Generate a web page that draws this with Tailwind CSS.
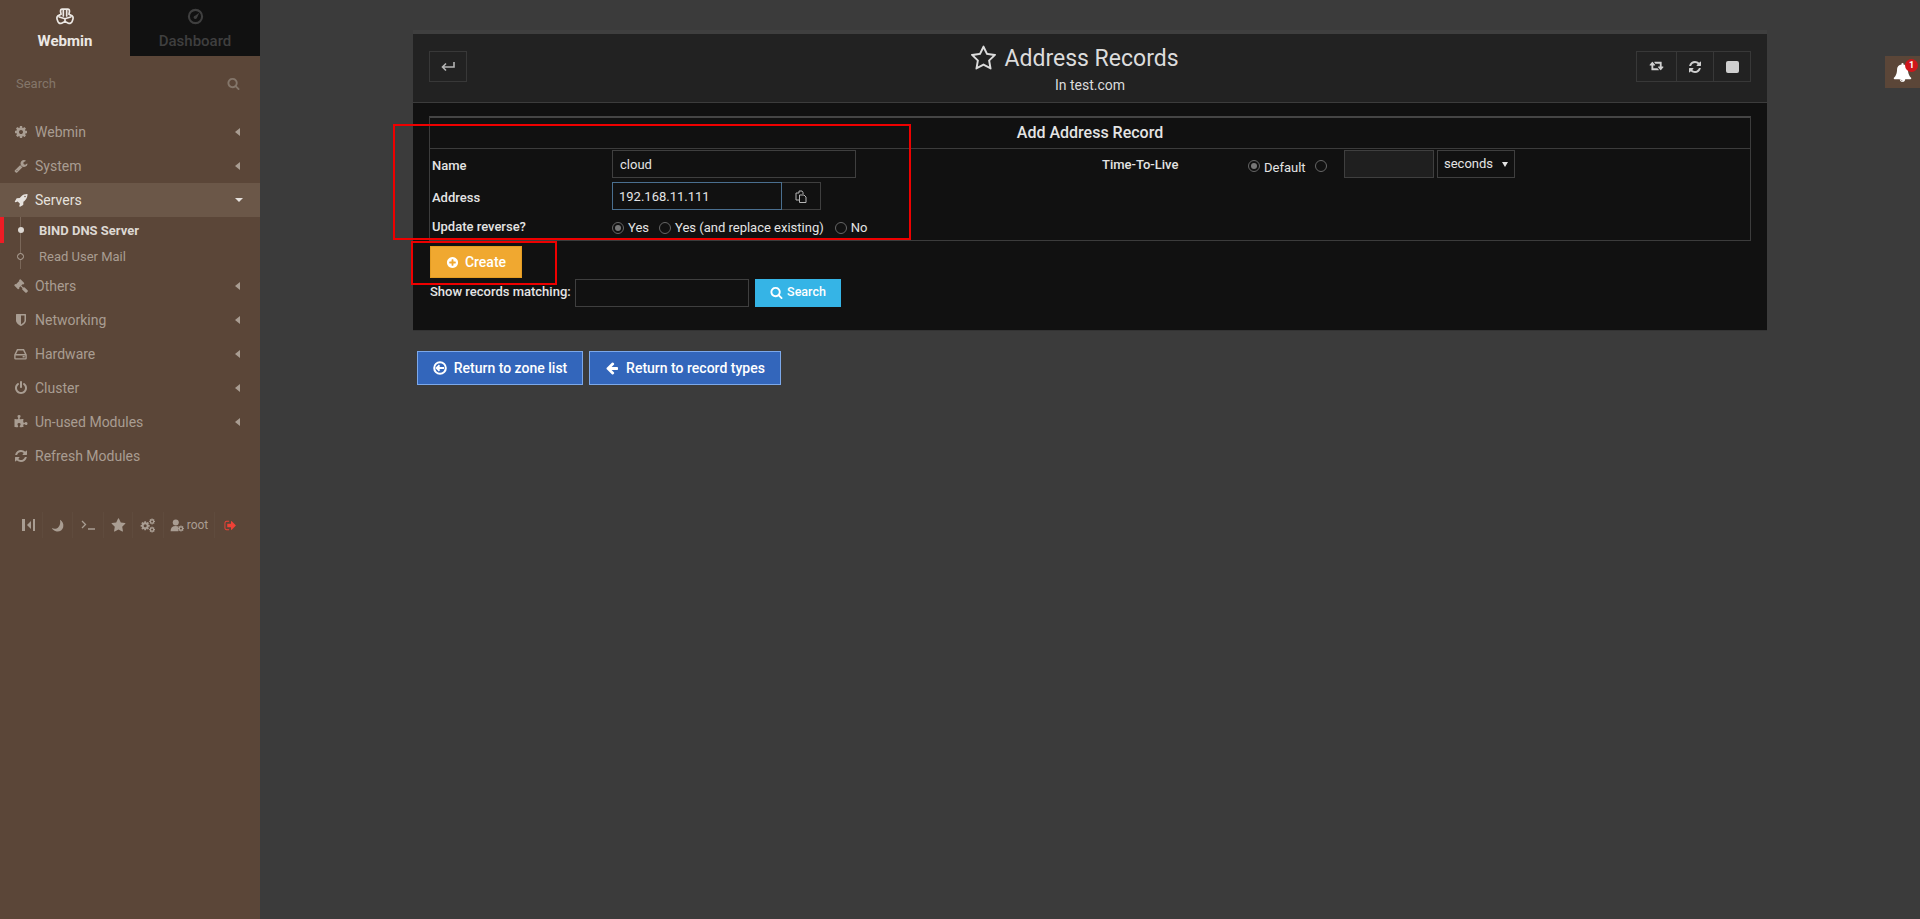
<!DOCTYPE html>
<html lang="en">
<head>
<meta charset="utf-8">
<title>Address Records</title>
<script src="https://cdn.jsdelivr.net/npm/@tailwindcss/browser@4"></script>
</head>
<body class="[font-family:Roboto,sans-serif] bg-[#3b3b3b] overflow-hidden">
<svg class="hidden">
  <symbol id="i-star-o" viewBox="0 0 1792 1792"><path d="M1201 1004l306-297-422-62-189-382-189 382-422 62 306 297-73 421 378-199 377 199zm527-357q0 22-26 48l-363 354 86 500q1 7 1 20 0 50-41 50-19 0-40-12l-449-236-449 236q-22 12-40 12-21 0-31.500-14.500t-10.500-35.500q0-6 2-20l86-500-364-354q-25-27-25-48 0-37 56-46l502-73 225-455q19-41 49-41t49 41l225 455 502 73q56 9 56 46z"/></symbol>
  <symbol id="i-star" viewBox="0 0 1792 1792"><path d="M1728 647q0 22-26 48l-363 354 86 500q1 7 1 20 0 21-10.500 35.500t-30.500 14.500q-19 0-40-12l-449-236-449 236q-22 12-40 12-21 0-31.500-14.500t-10.500-35.500q0-6 2-20l86-500-364-354q-25-27-25-48 0-37 56-46l502-73 225-455q19-41 49-41t49 41l225 455 502 73q56 9 56 46z"/></symbol>
  <symbol id="i-cog" viewBox="0 0 1792 1792"><path d="M1152 896q0-106-75-181t-181-75-181 75-75 181 75 181 181 75 181-75 75-181zm512-109v222q0 12-8 23t-20 13l-185 28q-19 54-39 91 35 50 107 138 10 12 10 25t-9 23q-27 37-99 108t-94 71q-12 0-26-9l-138-108q-44 23-91 38-16 136-29 186-7 28-36 28h-222q-14 0-24.500-8.500t-11.500-21.500l-28-184q-49-16-90-37l-141 107q-10 9-25 9-14 0-25-11-126-114-165-168-7-10-7-23 0-12 8-23 15-21 51-66.500t54-70.500q-27-50-41-99l-183-27q-13-2-21-12.500t-8-23.500v-222q0-12 8-23t19-13l186-28q14-46 39-92-40-57-107-138-10-12-10-24 0-10 9-23 26-36 98.500-107.500t94.500-71.500q13 0 26 10l138 107q44-23 91-38 16-136 29-186 7-28 36-28h222q14 0 24.500 8.500t11.500 21.500l28 184q49 16 90 37l142-107q9-9 24-9 13 0 25 10 129 119 165 170 7 8 7 22 0 12-8 23-15 21-51 66.500t-54 70.500q26 50 41 98l183 28q13 2 21 12.500t8 23.500z"/></symbol>
  <symbol id="i-wrench" viewBox="0 0 1792 1792"><path d="M448 1472q0-26-19-45t-45-19-45 19-19 45 19 45 45 19 45-19 19-45zm644-420l-682 682q-37 37-90 37-52 0-91-37l-106-108q-38-36-38-90 0-53 38-91l681-681q39 98 114.500 173.500t173.500 114.500zm634-435q0 39-23 106-47 134-164.500 217.500t-258.500 83.500q-185 0-316.500-131.500t-131.500-316.500 131.500-316.500 316.500-131.500q58 0 121.500 16.500t107.500 46.500q16 11 16 28t-16 28l-293 169v224l193 107q5-3 79-48.500t135.500-81 70.500-35.500q15 0 23.500 10t8.500 25z"/></symbol>
  <symbol id="i-rocket" viewBox="0 0 1792 1792"><path d="M1504 448q0-40-28-68t-68-28-68 28-28 68 28 68 68 28 68-28 28-68zm224-288q0 249-75.500 430.500t-253.500 360.500q-81 80-195 176l-20 379q-2 16-16 26l-384 224q-7 4-16 4-12 0-23-9l-64-64q-13-14-8-32l85-276-281-281-276 85q-3 1-9 1-14 0-23-9l-64-64q-17-19-5-39l224-384q10-14 26-16l379-20q96-114 176-195 188-187 358-258t431-71q14 0 24 9.500t10 22.500z"/></symbol>
  <symbol id="i-gavel" viewBox="0 0 1792 1792"><path d="M1771 1536q0 53-37 90l-107 108q-39 37-91 37-53 0-90-37l-363-364q-38-36-38-90 0-53 43-96l-256-256-126 126q-14 14-34 14t-34-14q2 2 12.500 12t12.500 13 10 11.500 10 13.500 6 13.500 5.500 16.500 1.500 18q0 38-28 68-3 3-16.500 18t-19 20.500-18.500 16.500-22 15.500-22 9-26 4.500q-40 0-68-28l-408-408q-28-28-28-68 0-13 4.500-26t9-22 15.500-22 16.500-18.500 20.500-19 18-16.500q30-28 68-28 10 0 18 1.500t16.500 5.500 13.500 6 13.500 10 11.500 10 13 12.500 12 12.500q-14-14-14-34t14-34l348-348q14-14 34-14t34 14q-2-2-12.500-12t-12.500-13-10-11.500-10-13.500-6-13.500-5.500-16.500-1.500-18q0-38 28-68 3-3 16.500-18t19-20.500 18.500-16.500 22-15.500 22-9 26-4.500q40 0 68 28l408 408q28 28 28 68 0 13-4.500 26t-9 22-15.500 22-16.500 18.500-20.500 19-18 16.500q-30 28-68 28-10 0-18-1.500t-16.500-5.500-13.500-6-13.500-10-11.500-10-13-12.500-12-12.500q14 14 14 34t-14 34l-126 126 256 256q43-43 96-43 52 0 91 37l363 363q37 39 37 91z"/></symbol>
  <symbol id="i-shield" viewBox="0 0 1792 1792"><path d="M1344 960v-640h-448v1137q119-63 213-137 235-184 235-360zm192-768v768q0 86-33.500 170.500t-83 150-118 127.500-126.500 103-121 77.500-89.500 49.500-42.500 20q-12 6-26 6t-26-6q-16-7-42.500-20t-89.500-49.500-121-77.500-126.500-103-118-127.500-83-150-33.500-170.500v-768q0-26 19-45t45-19h1152q26 0 45 19t19 45z"/></symbol>
  <symbol id="i-power" viewBox="0 0 1792 1792"><path d="M1664 896q0 156-61 298t-164 245-245 164-298 61-298-61-245-164-164-245-61-298q0-182 80.500-343t226.500-270q43-32 95.500-25t83.500 50q32 42 24.500 94.500t-49.500 84.500q-98 74-151.500 181t-53.500 228q0 104 40.500 198.500t109.500 163.500 163.500 109.500 198.500 40.500 198.500-40.500 163.500-109.500 109.500-163.500 40.500-198.500q0-121-53.500-228t-151.500-181q-42-32-49.500-84.500t24.500-94.500q31-43 84-50t95 25q146 109 226.500 270t80.500 343zm-640-768v640q0 52-38 90t-90 38-90-38-38-90v-640q0-52 38-90t90-38 90 38 38 90z"/></symbol>
  <symbol id="i-puzzle" viewBox="0 0 1792 1792"><path d="M1728 1098q0 81-44.500 135t-123.500 54q-41 0-77.500-17.500t-59-38-56.500-38-71-17.500q-110 0-110 124 0 39 16 115t15 115v5q-22 0-33 1-34 3-97.500 11.500t-115.500 13.500-98 5q-61 0-103-26.500t-42-83.500q0-37 17.500-71t38-56.500 38-59 17.500-77.500q0-79-54-123.500t-135-44.500q-84 0-143 45.500t-59 127.500q0 43 15 83t33.500 64.500 33.500 53 15 50.500q0 45-46 89-37 35-117 35-95 0-245-24-9-2-27.500-4t-27.500-4l-13-2q-1 0-3-1-2 0-2-1v-1024q2 1 17.500 3.500t34 5 21.500 3.500q150 24 245 24 80 0 117-35 46-44 46-89 0-22-15-50.500t-33.500-53-33.500-64.500-15-83q0-82 59-127.500t144-45.500q80 0 134 44.500t54 123.500q0 41-17.500 77.500t-38 59-38 56.500-17.500 71q0 57 42 83.500t103 26.500q64 0 180-15t163-17v2q-1 2-3.500 17.500t-5 34-3.500 21.500q-24 150-24 245 0 80 35 117 44 46 89 46 22 0 50.500-15t53-33.500 64.500-33.500 83-15q82 0 127.500 59t45.500 143z"/></symbol>
  <symbol id="i-refresh" viewBox="0 0 1792 1792"><path d="M1639 1056q0 5-1 7-64 268-268 434.500t-478 166.500q-146 0-282.500-55t-243.500-157l-129 129q-19 19-45 19t-45-19-19-45v-448q0-26 19-45t45-19h448q26 0 45 19t19 45-19 45l-137 137q71 66 161 102t187 36q134 0 250-65t186-179q11-17 53-117 8-23 30-23h192q13 0 22.500 9.500t9.500 22.500zm25-800v448q0 26-19 45t-45 19h-448q-26 0-45-19t-19-45 19-45l138-138q-148-137-349-137-134 0-250 65t-186 179q-11 17-53 117-8 23-30 23h-199q-13 0-22.500-9.500t-9.500-22.500v-7q65-268 270-434.500t480-166.500q146 0 284 55.500t245 156.500l130-129q19-19 45-19t45 19 19 45z"/></symbol>
  <symbol id="i-search" viewBox="0 0 1792 1792"><path d="M1216 832q0-185-131.500-316.500t-316.500-131.500-316.500 131.500-131.500 316.500 131.500 316.500 316.500 131.500 316.500-131.500 131.500-316.500zm512 832q0 52-38 90t-90 38q-54 0-90-38l-343-342q-179 124-399 124-143 0-273.500-55.500t-225-150-150-225-55.500-273.500 55.500-273.500 150-225 225-150 273.500-55.500 273.500 55.500 225 150 150 225 55.500 273.500q0 220-124 399l343 343q37 37 37 90z"/></symbol>
  <symbol id="i-bell" viewBox="0 0 1792 1792"><path d="M912 1696q0-16-16-16-59 0-101.500-42.500t-42.500-101.500q0-16-16-16t-16 16q0 73 51.500 124.500t124.500 51.500q16 0 16-16zm816-288q0 52-38 90t-90 38h-448q0 106-75 181t-181 75-181-75-75-181h-448q-52 0-90-38t-38-90q50-42 91-88t85-119.500 74.500-158.500 50-206 19.500-260q0-152 117-282.500t307-158.500q-8-19-8-39 0-40 28-68t68-28 68 28 28 68q0 20-8 39 190 28 307 158.500t117 282.500q0 139 19.500 260t50 206 74.500 158.500 85 119.500 91 88z"/></symbol>
  <symbol id="i-plus" viewBox="0 0 1792 1792"><path d="M1344 960v-128q0-26-19-45t-45-19h-256v-256q0-26-19-45t-45-19h-128q-26 0-45 19t-19 45v256h-256q-26 0-45 19t-19 45v128q0 26 19 45t45 19h256v256q0 26 19 45t45 19h128q26 0 45-19t19-45v-256h256q26 0 45-19t19-45zm320-64q0 209-103 385.500t-279.500 279.500-385.500 103-385.500-103-279.500-279.500-103-385.500 103-385.500 279.500-279.500 385.500-103 385.500 103 279.500 279.500 103 385.500z"/></symbol>
  <symbol id="i-left" viewBox="0 0 1792 1792"><path d="M1664 896v128q0 53-32.500 90.500t-84.500 37.500h-704l293 294q38 36 38 90t-38 90l-75 76q-37 37-90 37-52 0-91-37l-651-652q-37-37-37-90 0-52 37-91l651-650q38-38 91-38 52 0 90 38l75 74q38 38 38 91t-38 91l-293 293h704q52 0 84.500 37.500t32.500 90.500z"/></symbol>
  <symbol id="i-signout" viewBox="0 0 1792 1792"><path d="M704 1440q0 4 1 20t.5 26.500-3 23.500-10 19.500-20.500 6.500h-320q-119 0-203.500-84.500t-84.500-203.500v-704q0-119 84.500-203.500t203.500-84.500h320q13 0 22.500 9.500t9.500 22.500q0 4 1 20t.5 26.500-3 23.500-10 19.500-20.500 6.500h-320q-66 0-113 47t-47 113v704q0 66 47 113t113 47h312l11.500 1 11.500 3 8 5.500 7 9 2 13.500zm928-544q0 26-19 45l-544 544q-19 19-45 19t-45-19-19-45v-288h-448q-26 0-45-19t-19-45v-384q0-26 19-45t45-19h448v-288q0-26 19-45t45-19 45 19l544 544q19 19 19 45z"/></symbol>
  <symbol id="i-retweet" viewBox="0 0 1920 1792"><path d="M1152 1376q0 13-9.500 22.500t-22.500 9.500h-960q-8 0-13.500-2t-9-7-5.500-8-3-11.500-1-11.500v-600h-192q-26 0-45-19t-19-45q0-24 15-41l320-384q19-22 49-22t49 22l320 384q15 17 15 41 0 26-19 45t-45 19h-192v384h576q16 0 25 11l160 192q7 10 7 21zm640-416q0 24-15 41l-320 384q-20 23-49 23t-49-23l-320-384q-15-17-15-41 0-26 19-45t45-19h192v-384h-576q-16 0-25-12l-160-192q-7-9-7-20 0-13 9.500-22.500t22.500-9.500h960q8 0 13.500 2t9 7 5.500 8 3 11.500 1 11.500v600h192q26 0 45 19t19 45z" transform="translate(64 0)"/></symbol>
  <symbol id="i-hdd" viewBox="0 0 20 20"><path fill-rule="evenodd" d="M5 3h10l4 8v5a2 2 0 0 1-2 2H3a2 2 0 0 1-2-2v-5zm1.300 2L3.800 10h12.400l-2.500-5zM3 12v4h14v-4zm10 1h3v2h-3z"/></symbol>
  <symbol id="i-webmin" viewBox="0 0 32 30"><path fill="none" stroke="currentColor" stroke-width="3" stroke-linejoin="round" stroke-linecap="round" d="M11 2h10c2 0 3 2 3 4l-1 5 4 2c3 1 4 4 3 7l-1 3c-1 3-4 5-7 4l-6-3-6 3c-3 1-6-1-7-4l-1-3c-1-3 0-6 3-7l4-2-1-5c0-2 1-4 3-4zM13 3v11M19 3v11M16 19L6 16M16 19l10-3M16 19v6"/></symbol>
  <symbol id="i-gauge" viewBox="0 0 20 20"><path fill-rule="evenodd" d="M10 1a9 9 0 1 1 0 18 9 9 0 0 1 0-18zm0 2.500a6.500 6.500 0 1 0 0 13 6.500 6.500 0 0 0 0-13zM14.500 5.500l-3 6.500a2 2 0 1 1-2-3z"/></symbol>
  <symbol id="i-cogs" viewBox="0 0 24 24"><use href="#i-cog" x="-1" y="4" width="17" height="17"/><use href="#i-cog" x="13" y="0" width="11" height="11"/><use href="#i-cog" x="13" y="13" width="11" height="11"/></symbol>
</svg>

<div class="flex h-[919px]">
  <!-- sidebar -->
  <aside class="w-[260px] shrink-0 bg-[#5b4638] text-[#a99d92] text-[14px]">
    <div class="flex h-[56px]">
      <div class="w-[130px] flex flex-col items-center pt-[8px] text-[#ece8e4]">
        <svg class="w-[18px] h-[17px]"><use href="#i-webmin"/></svg>
        <span class="font-bold text-[15px] mt-[6px] leading-[20px]">Webmin</span>
      </div>
      <div class="w-[130px] bg-[#111] flex flex-col items-center pt-[8px] text-[#3f3f3f]">
        <svg class="w-[17px] h-[17px] fill-current"><use href="#i-gauge"/></svg>
        <span class="font-medium text-[15px] mt-[6px] leading-[20px]">Dashboard</span>
      </div>
    </div>
    <div class="h-[59px] flex items-center justify-between pl-[16px] pr-[20px] pb-[4px] text-[#84766a]">
      <span class="text-[13px]">Search</span>
      <svg class="w-[13px] h-[13px] fill-current"><use href="#i-search"/></svg>
    </div>
    <nav>
      <a class="flex items-center h-[34px] pl-[14px] pr-[20px]"><svg class="w-[14px] h-[14px] fill-current mr-[7px]"><use href="#i-cog"/></svg>Webmin<span class="ml-auto border-y-[4px] border-y-transparent border-r-[5px] border-r-current"></span></a>
      <a class="flex items-center h-[34px] pl-[14px] pr-[20px]"><svg class="w-[14px] h-[14px] fill-current mr-[7px]"><use href="#i-wrench"/></svg>System<span class="ml-auto border-y-[4px] border-y-transparent border-r-[5px] border-r-current"></span></a>
      <a class="flex items-center h-[34px] pl-[14px] pr-[17px] bg-[#6b5748] text-[#e6e2de]"><svg class="w-[14px] h-[14px] fill-current mr-[7px]"><use href="#i-rocket"/></svg>Servers<span class="ml-auto border-x-[4px] border-x-transparent border-t-[4px] border-t-current"></span></a>
      <div class="relative">
        <span class="absolute left-[20px] top-0 bottom-0 w-px bg-[#7a6759]"></span>
        <a class="relative flex items-center h-[26px] pl-[39px] pt-[2px] text-[13px] font-bold text-[#ddd8d3]">
          <span class="absolute left-0 top-0 w-[4px] h-[26px] bg-[#ee1c25]"></span>
          <span class="absolute left-[18px] top-[10px] w-[6px] h-[6px] rounded-full bg-[#ddd8d3]"></span>BIND DNS Server</a>
        <a class="relative flex items-center h-[26px] pl-[39px] pt-[2px] text-[13px]">
          <span class="absolute left-[17px] top-[10px] w-[7px] h-[7px] rounded-full border border-[#b5a99e] bg-[#5b4638]"></span>Read User Mail</a>
      </div>
      <a class="flex items-center h-[34px] pl-[14px] pr-[20px]"><svg class="w-[14px] h-[14px] fill-current mr-[7px]"><use href="#i-gavel"/></svg>Others<span class="ml-auto border-y-[4px] border-y-transparent border-r-[5px] border-r-current"></span></a>
      <a class="flex items-center h-[34px] pl-[14px] pr-[20px]"><svg class="w-[14px] h-[14px] fill-current mr-[7px]"><use href="#i-shield"/></svg>Networking<span class="ml-auto border-y-[4px] border-y-transparent border-r-[5px] border-r-current"></span></a>
      <a class="flex items-center h-[34px] pl-[13px] pr-[20px]"><svg class="w-[15px] h-[14px] fill-current mr-[7px]"><use href="#i-hdd"/></svg>Hardware<span class="ml-auto border-y-[4px] border-y-transparent border-r-[5px] border-r-current"></span></a>
      <a class="flex items-center h-[34px] pl-[14px] pr-[20px]"><svg class="w-[14px] h-[14px] fill-current mr-[7px]"><use href="#i-power"/></svg>Cluster<span class="ml-auto border-y-[4px] border-y-transparent border-r-[5px] border-r-current"></span></a>
      <a class="flex items-center h-[34px] pl-[14px] pr-[20px]"><svg class="w-[14px] h-[14px] fill-current mr-[7px]"><use href="#i-puzzle"/></svg>Un-used Modules<span class="ml-auto border-y-[4px] border-y-transparent border-r-[5px] border-r-current"></span></a>
      <a class="flex items-center h-[34px] pl-[14px] pr-[20px]"><svg class="w-[14px] h-[14px] fill-current mr-[7px]"><use href="#i-refresh"/></svg>Refresh Modules</a>
    </nav>
    <div class="flex items-center h-[26px] mt-[39px] ml-[14px] w-[231px] text-[#a99d92] divide-x divide-[#5f4b3d]">
      <div class="w-[29px] h-full flex items-center justify-center gap-[2px]">
        <span class="w-[3px] h-[12px] bg-current"></span><span class="border-y-[4px] border-y-transparent border-r-[4px] border-r-current"></span><span class="w-[2px] h-[12px] bg-current"></span>
      </div>
      <div class="w-[30px] h-full flex items-center justify-center">
        <svg class="w-[13px] h-[13px] fill-current" viewBox="0 0 16 16"><path d="M11 1c3 2 5 5 4 9-1 4-5 6-9 5-2-.5-4-2-5-4 3 1.500 6 1 8-1 2-2 3-5 2-9z"/></svg>
      </div>
      <div class="w-[31px] h-full flex items-center justify-center">
        <svg class="w-[14px] h-[10px] stroke-current fill-none" viewBox="0 0 14 10" stroke-width="1.300"><path d="M1 1l3.500 3.500L1 8M7 9h7"/></svg>
      </div>
      <div class="w-[29px] h-full flex items-center justify-center">
        <svg class="w-[15px] h-[15px] fill-current"><use href="#i-star"/></svg>
      </div>
      <div class="w-[31px] h-full flex items-center justify-center">
        <svg class="w-[16px] h-[15px] fill-current"><use href="#i-cogs"/></svg>
      </div>
      <div class="w-[51px] h-full flex items-center justify-center gap-[2px] text-[12px]">
        <svg class="w-[15px] h-[13px] fill-current" viewBox="0 0 16 15"><circle cx="6" cy="4" r="3.500"/><path d="M0 14c0-4 2-6 6-6 1 0 2 .2 3 .6V14z"/><use href="#i-cog" x="8" y="7" width="8" height="8"/></svg>root
      </div>
      <div class="w-[30px] h-full flex items-center justify-center text-[#ef4136]">
        <svg class="w-[13px] h-[13px] fill-current"><use href="#i-signout"/></svg>
      </div>
    </div>
  </aside>

  <!-- main -->
  <main class="flex-1 pt-[30px] pl-[153px] text-[#e4e4e4]">
    <section class="w-[1354px] border-t-[4px] border-[#3f3f3f] border-b border-b-[#333]">
      <header class="flex items-center h-[69px] px-[16px] bg-[#222] border-b border-[#3c3c3c]">
        <div class="flex-1 self-start pt-[17px]">
          <button class="w-[38px] h-[31px] border border-[#383838] flex items-center justify-center text-[#b5b5b5]">
            <svg class="w-[14px] h-[10px] stroke-current fill-none" viewBox="0 0 14 10" stroke-width="1.600"><path d="M13 0v5H2M5 1.500L1.500 5 5 8.500"/></svg>
          </button>
        </div>
        <div class="text-center text-[#dcdcdc] pt-[2px]">
          <h1 class="flex items-center justify-center gap-[7px] -ml-[31px] text-[23px] leading-[30px]">
            <svg class="w-[27px] h-[27px] fill-current"><use href="#i-star-o"/></svg>Address Records
          </h1>
          <p class="text-[14px] leading-[20px] mt-[1px]">In test.com</p>
        </div>
        <div class="flex-1 flex justify-end self-start pt-[17px]">
          <div class="flex h-[31px] border border-[#383838] text-[#cfcfcf] divide-x divide-[#383838]">
            <div class="w-[40px] flex items-center justify-center"><svg class="w-[16px] h-[13px] fill-current"><use href="#i-retweet"/></svg></div>
            <div class="w-[37px] flex items-center justify-center"><svg class="w-[14px] h-[14px] fill-current"><use href="#i-refresh"/></svg></div>
            <div class="w-[36px] flex items-center justify-center"><span class="w-[13px] h-[12px] rounded-[2px] bg-current"></span></div>
          </div>
        </div>
      </header>
      <div class="bg-[#111] pl-[16px] pr-[16px] pt-[13px] pb-[23px]">
        <div class="border border-[#3c3c3c] border-t-2 border-t-[#454545]">
          <h2 class="h-[31px] flex items-center justify-center text-[16px] font-medium border-b border-[#3c3c3c]">Add Address Record</h2>
          <div class="flex h-[91px] pt-[1px] text-[13px]">
            <div class="w-[671px] pl-[2px]">
              <div class="flex items-center h-[28px]">
                <label class="w-[180px] font-medium pt-[4px]">Name</label>
                <input value="cloud" class="w-[244px] h-[28px] bg-transparent border border-[#3f3f3f] pl-[7px] pr-[6px] outline-none">
              </div>
              <div class="flex items-center h-[28px] mt-[4px]">
                <label class="w-[180px] font-medium pt-[3px]">Address</label>
                <input value="192.168.11.111" class="w-[170px] h-[28px] bg-transparent border border-[#4a6f8f] px-[6px] outline-none">
                <span class="w-[39px] h-[28px] border border-l-0 border-[#3f3f3f] flex items-center justify-center text-[#b5b5b5]">
                  <svg class="w-[12px] h-[13px] stroke-current fill-none" viewBox="0 0 12 13"><path d="M1 3h3V1h3l1 1.500V4M1 3v7h3"/><path class="fill-[#111]" d="M4.500 5h4.500l2 2v5.500H4.500z"/></svg>
                </span>
              </div>
              <div class="flex items-center h-[25px] mt-[5px]">
                <label class="w-[180px] font-medium -mt-[2px]">Update reverse?</label>
                <span class="w-[12px] h-[12px] rounded-full border border-[#666] flex items-center justify-center"><span class="w-[6px] h-[6px] rounded-full bg-[#777]"></span></span>
                <span class="ml-[4px]">Yes</span>
                <span class="ml-[10px] w-[12px] h-[12px] rounded-full border border-[#666]"></span>
                <span class="ml-[4px]">Yes (and replace existing)</span>
                <span class="ml-[11px] w-[12px] h-[12px] rounded-full border border-[#666]"></span>
                <span class="ml-[4px]">No</span>
              </div>
            </div>
            <div class="flex items-start">
              <label class="w-[147px] pl-[1px] pt-[1px] leading-[28px] font-medium">Time-To-Live</label>
              <div class="flex items-center h-[28px]">
                <span class="mt-[4px] w-[12px] h-[12px] rounded-full border border-[#666] flex items-center justify-center"><span class="w-[6px] h-[6px] rounded-full bg-[#777]"></span></span>
                <span class="ml-[4px] w-[51px] mt-[7px]">Default</span>
                <span class="mt-[4px] w-[12px] h-[12px] rounded-full border border-[#666]"></span>
                <input class="ml-[17px] w-[90px] h-[28px] bg-[#1f1f1f] border border-[#3f3f3f] outline-none">
                <span class="ml-[3px] w-[78px] h-[28px] border border-[#3f3f3f] flex items-center justify-between pl-[6px] pr-[6px]">seconds<span class="border-x-[3px] border-x-transparent border-t-[5px] border-t-current"></span></span>
              </div>
            </div>
          </div>
        </div>
        <button class="flex items-center justify-center gap-[6px] ml-px mt-[5px] w-[92px] h-[32px] bg-[#f0a830] border border-[#e49c22] text-white text-[14px] font-medium">
          <svg class="w-[13px] h-[13px] fill-current"><use href="#i-plus"/></svg>Create
        </button>
        <form class="flex items-center ml-px mt-px text-[13px]">
          <label class="w-[145px] font-medium pb-[2px]">Show records matching:</label>
          <input class="w-[174px] h-[28px] bg-transparent border border-[#3f3f3f] outline-none">
          <button type="button" class="flex items-center justify-center gap-[4px] ml-[6px] w-[86px] h-[28px] pb-[2px] bg-[#35b4e6] text-white font-medium text-[12.500px]">
            <svg class="w-[13px] h-[13px] fill-current"><use href="#i-search"/></svg>Search
          </button>
        </form>
      </div>
    </section>
    <div class="flex gap-[6px] mt-[20px] ml-[4px] text-[14px] font-medium text-white">
      <button class="flex items-center justify-center gap-[7px] w-[166px] h-[34px] bg-[#3366bb] border border-[#7ca8ea]">
        <svg class="w-[14px] h-[14px] stroke-current fill-none" viewBox="0 0 14 14" stroke-width="2"><circle cx="7" cy="7" r="5.800"/><path d="M11 7H4M6.500 4.200L3.700 7l2.800 2.800"/></svg>Return to zone list
      </button>
      <button class="flex items-center justify-center gap-[7px] w-[192px] h-[34px] bg-[#3366bb] border border-[#7ca8ea]">
        <svg class="w-[14px] h-[14px] fill-current"><use href="#i-left"/></svg>Return to record types
      </button>
    </div>
  </main>
</div>

<!-- notification tab -->
<div class="absolute top-[56px] right-0 w-[35px] h-[32px] bg-[#5b4638] flex items-center justify-center text-white">
  <svg class="w-[19px] h-[21px] fill-current"><use href="#i-bell"/></svg>
  <span class="absolute top-[3px] left-[20px] w-[13px] h-[13px] rounded-full bg-[#d0161b] text-[9px] font-bold leading-[13px] text-center">1</span>
</div>

<!-- red annotation boxes drawn over the screenshot -->
<div class="absolute left-[393px] top-[124px] w-[518px] h-[116px] border-2 border-[#ee0000]"></div>
<div class="absolute left-[411px] top-[241px] w-[146px] h-[44px] border-2 border-[#ee0000]"></div>
</body>
</html>
